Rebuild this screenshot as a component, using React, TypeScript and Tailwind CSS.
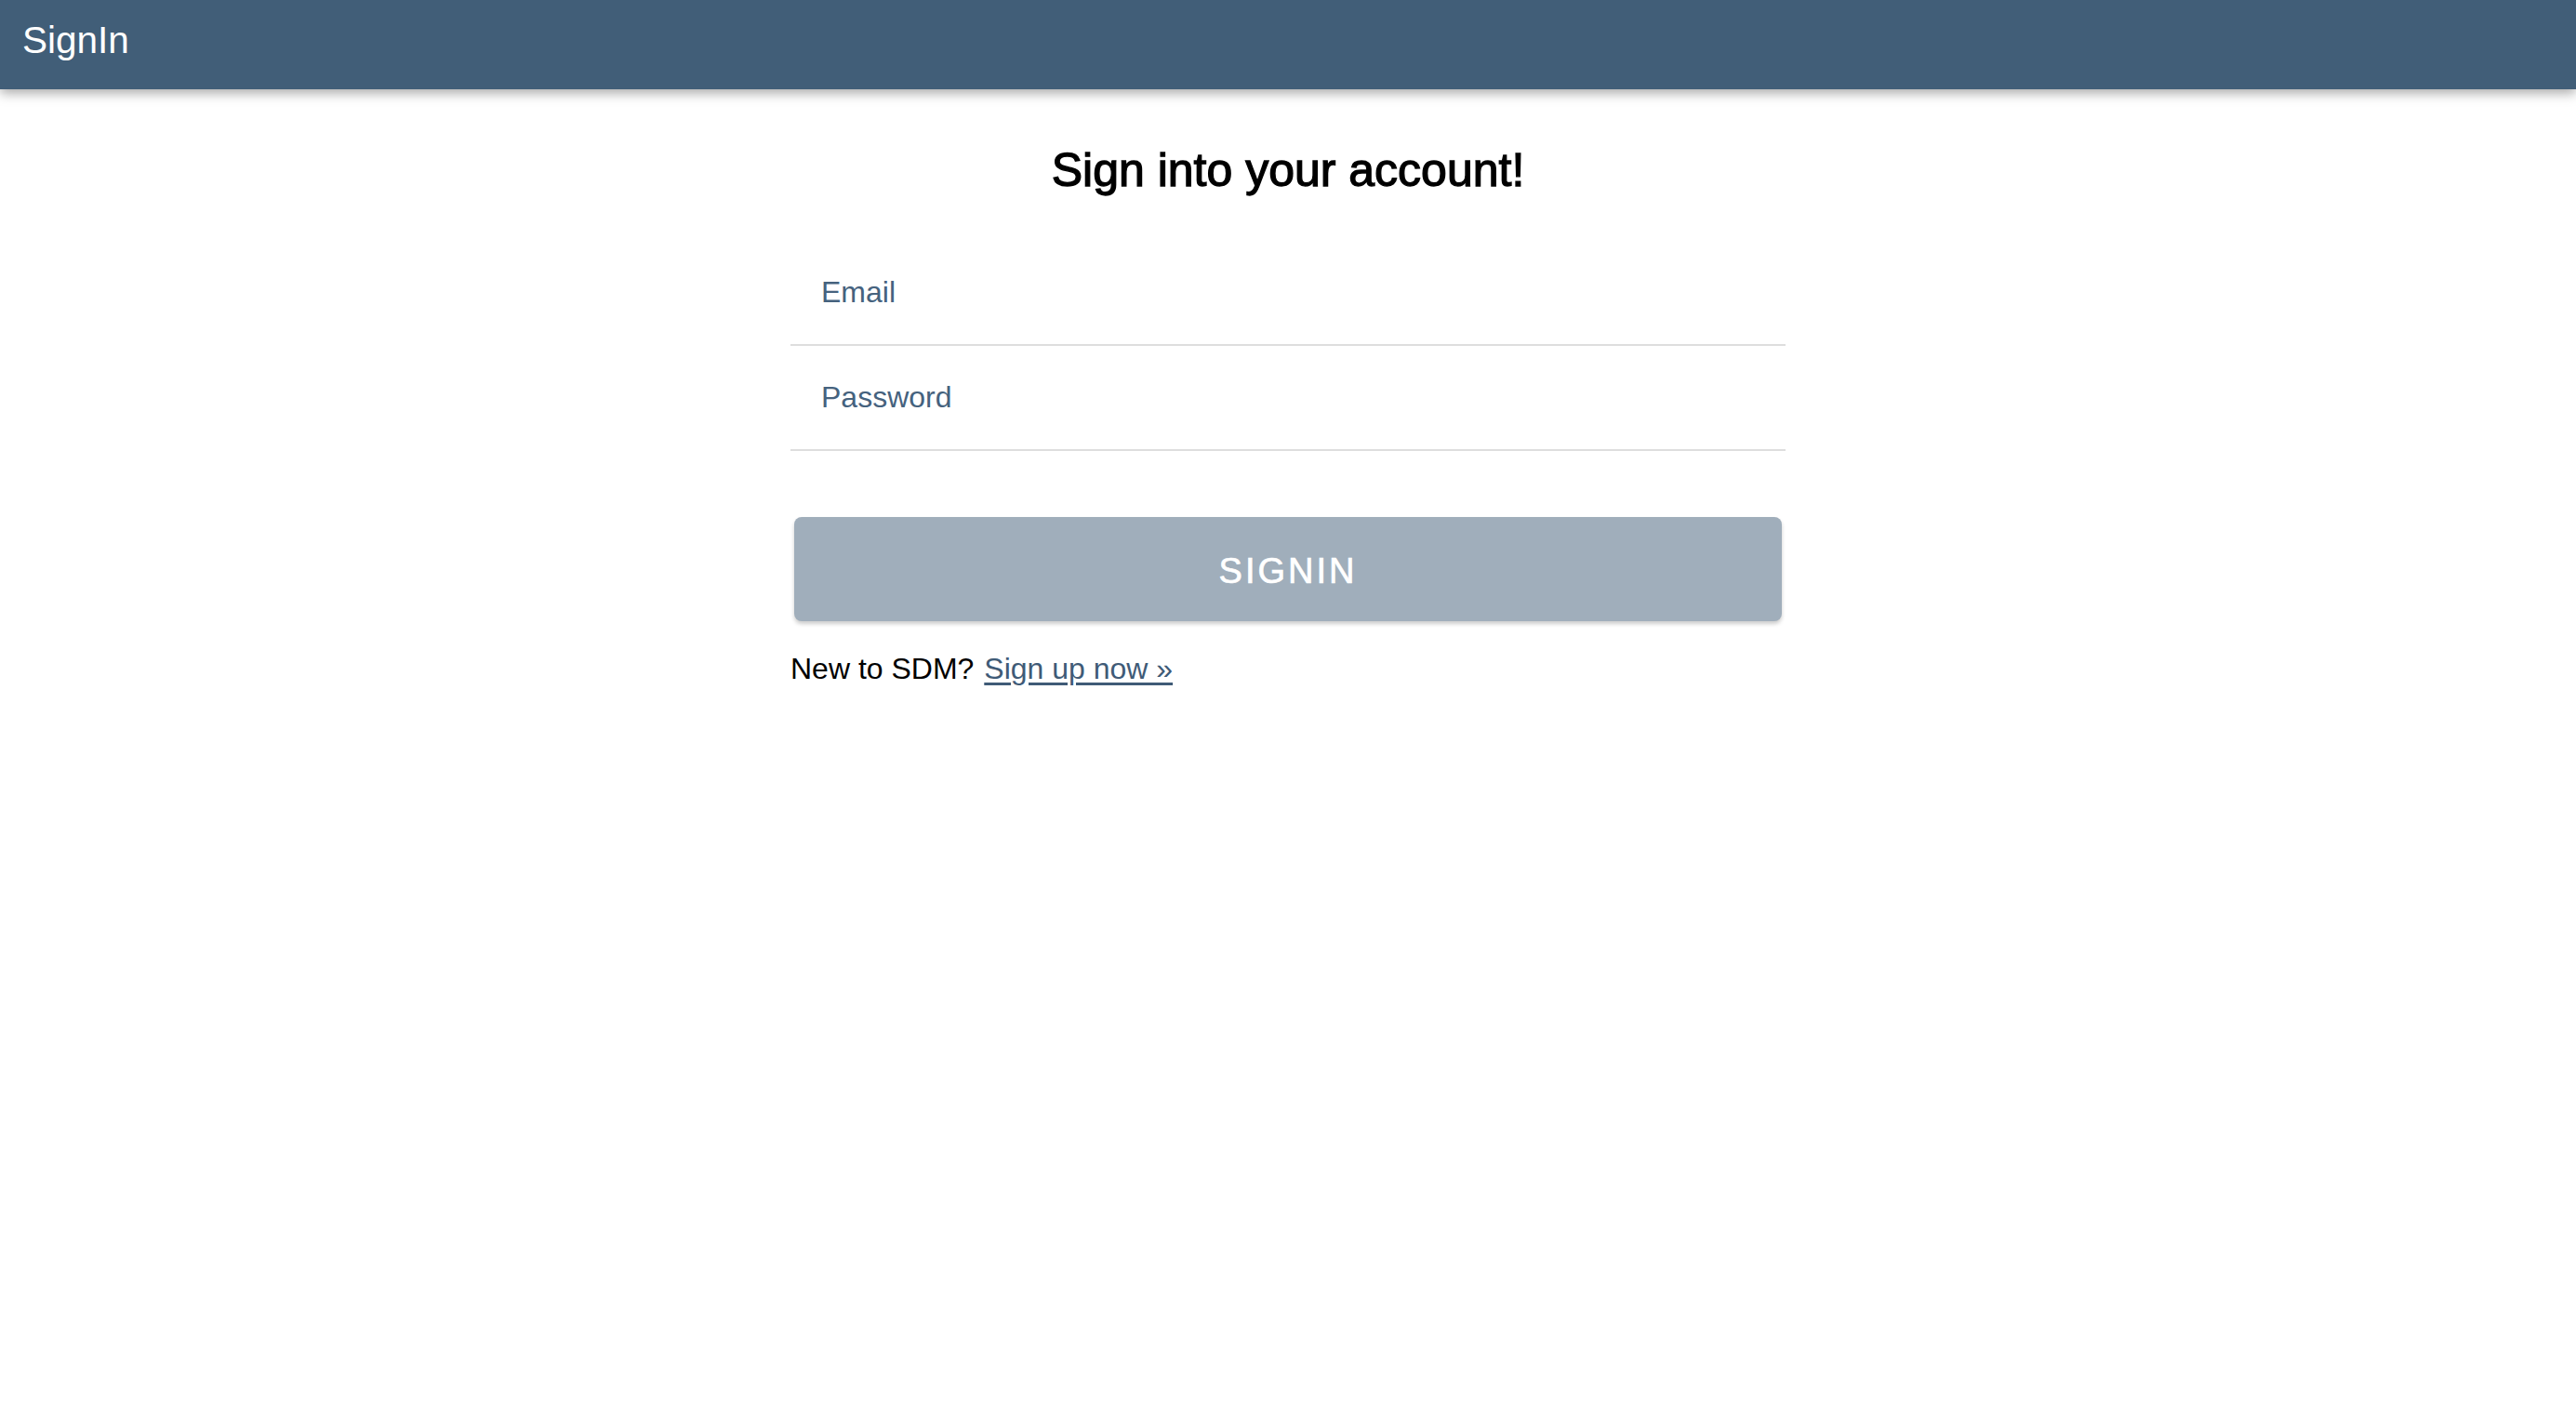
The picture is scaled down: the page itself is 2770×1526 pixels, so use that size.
import React from "react";

export default function App() {
  return (
    <div className="min-h-screen w-full bg-white font-['Liberation_Sans',Arial,sans-serif]">
      <header className="h-[96px] w-full bg-[#415e78] shadow-[0_4px_12px_rgba(0,0,0,0.35)] relative z-10">
        <div className="pl-[24px] pt-[19px] text-[40.5px] leading-[48px] text-white">SignIn</div>
      </header>
      <main className="mx-auto w-[1070px] flex flex-col">
        <h1 className="mt-[57px] text-center text-[50px] leading-[60px] font-normal text-black [-webkit-text-stroke:1.3px_black]">
          Sign into your account!
        </h1>
        <div className="mt-[46px] flex flex-col">
          <input
            type="email"
            placeholder="Email"
            className="h-[113px] w-full border-b-2 border-[#dedede] bg-transparent px-[33px] text-[32px] text-[#45627e] placeholder:text-[#45627e] outline-none"
          />
          <input
            type="password"
            placeholder="Password"
            className="h-[113px] w-full border-b-2 border-[#dedede] bg-transparent px-[33px] text-[32px] text-[#45627e] placeholder:text-[#45627e] outline-none"
          />
        </div>
        <button className="mx-[4px] mt-[71px] h-[112px] rounded-[8px] bg-[#a0aebb] pt-[5px] text-[38px] font-medium tracking-[3px] text-white shadow-[0_3px_4px_rgba(0,0,0,0.2)] [-webkit-text-stroke:0.7px_white]">
          SIGNIN
        </button>
        <p className="mt-[31px] text-[32px] leading-[40px] text-black">
          New to SDM?{" "}
          <a href="#" className="ml-[2px] text-[#3f5b77] underline underline-offset-[4px]">
            Sign up now »
          </a>
        </p>
      </main>
    </div>
  );
}
